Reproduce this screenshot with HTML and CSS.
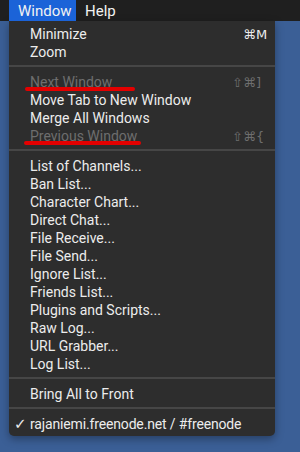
FILE: index.html
```html
<!DOCTYPE html>
<html lang="en">
<head>
  <meta charset="UTF-8">
  <meta name="viewport" content="width=device-width, initial-scale=1.0">
  <title>Window Menu</title>
  <link rel="stylesheet" href="styles.css">
</head>
<body>
  <div class="menubar">
    <span class="menubar-item active">Window</span>
    <span class="menubar-item">Help</span>
  </div>

  <div class="stage">
    <div class="menu">
      <div class="item">
        <span class="label">Minimize</span>
        <span class="shortcut"><span class="mods">⌘</span><span class="key">M</span></span>
      </div>
      <div class="item"><span class="label">Zoom</span></div>

      <div class="separator"></div>

      <div class="item disabled">
        <span class="label">Next Window</span>
        <span class="shortcut"><span class="mods">⇧⌘</span><span class="key">]</span></span>
        <span class="mark mark-next"></span>
      </div>
      <div class="item"><span class="label">Move Tab to New Window</span></div>
      <div class="item"><span class="label">Merge All Windows</span></div>
      <div class="item disabled">
        <span class="label">Previous Window</span>
        <span class="shortcut"><span class="mods">⇧⌘</span><span class="key">{</span></span>
        <span class="mark mark-prev"></span>
      </div>

      <div class="separator"></div>

      <div class="item"><span class="label">List of Channels...</span></div>
      <div class="item"><span class="label">Ban List...</span></div>
      <div class="item"><span class="label">Character Chart...</span></div>
      <div class="item"><span class="label">Direct Chat...</span></div>
      <div class="item"><span class="label">File Receive...</span></div>
      <div class="item"><span class="label">File Send...</span></div>
      <div class="item"><span class="label">Ignore List...</span></div>
      <div class="item"><span class="label">Friends List...</span></div>
      <div class="item"><span class="label">Plugins and Scripts...</span></div>
      <div class="item"><span class="label">Raw Log...</span></div>
      <div class="item"><span class="label">URL Grabber...</span></div>
      <div class="item"><span class="label">Log List...</span></div>

      <div class="separator"></div>

      <div class="item"><span class="label">Bring All to Front</span></div>

      <div class="separator"></div>

      <div class="item checked">
        <span class="check">✓</span>
        <span class="label">rajaniemi.freenode.net / #freenode</span>
      </div>
    </div>
  </div>
</body>
</html>
```

FILE: styles.css
```css
body {
  margin: 0;
  width: 300px;
  height: 452px;
  overflow: hidden;
  background-color: #3b5f96;
  font-family: Roboto, "Noto Sans", sans-serif;
  font-size: 14px;
  color: #ececec;
}
.menubar {
  display: flex;
  height: 21px;
  padding-left: 9px;
  background-color: #1f1f1f;
}
.menubar-item {
  padding: 1px 8px 0 9px;
  line-height: 20px;
  font-size: 15px;
  color: #f2f2f2;
}
.menubar-item.active {
  width: 50px;
  background-color: #1b63d8;
}
.stage {
  padding-left: 9px;
}
.menu {
  width: 266px;
  padding: 3px 0 4px;
  background-color: #2d2d2d;
  border-radius: 0 0 5px 5px;
  box-shadow: 0 3px 8px rgba(0, 0, 0, 0.35);
}
.item {
  position: relative;
  display: flex;
  align-items: center;
  box-sizing: border-box;
  height: 18px;
  padding: 2px 7px 0 21px;
}
.label {
  flex: 1;
  white-space: nowrap;
}
.checked .label {
  letter-spacing: -0.15px;
}
.disabled {
  color: #6e6e6e;
}
.shortcut {
  display: flex;
  font-family: "DejaVu Sans", sans-serif;
  font-size: 13px;
}
.key {
  width: 12px;
}
.check {
  position: absolute;
  left: 5px;
  font-family: "DejaVu Sans", sans-serif;
  font-size: 15px;
}
.separator {
  height: 2px;
  margin: 5px 0;
  background-color: #464646;
}
.mark {
  position: absolute;
  top: 15px;
  height: 4px;
  border-radius: 2px;
  background-color: #e40000;
}
.mark-next {
  left: 16px;
  width: 110px;
}
.mark-prev {
  left: 15px;
  width: 117px;
}
```
